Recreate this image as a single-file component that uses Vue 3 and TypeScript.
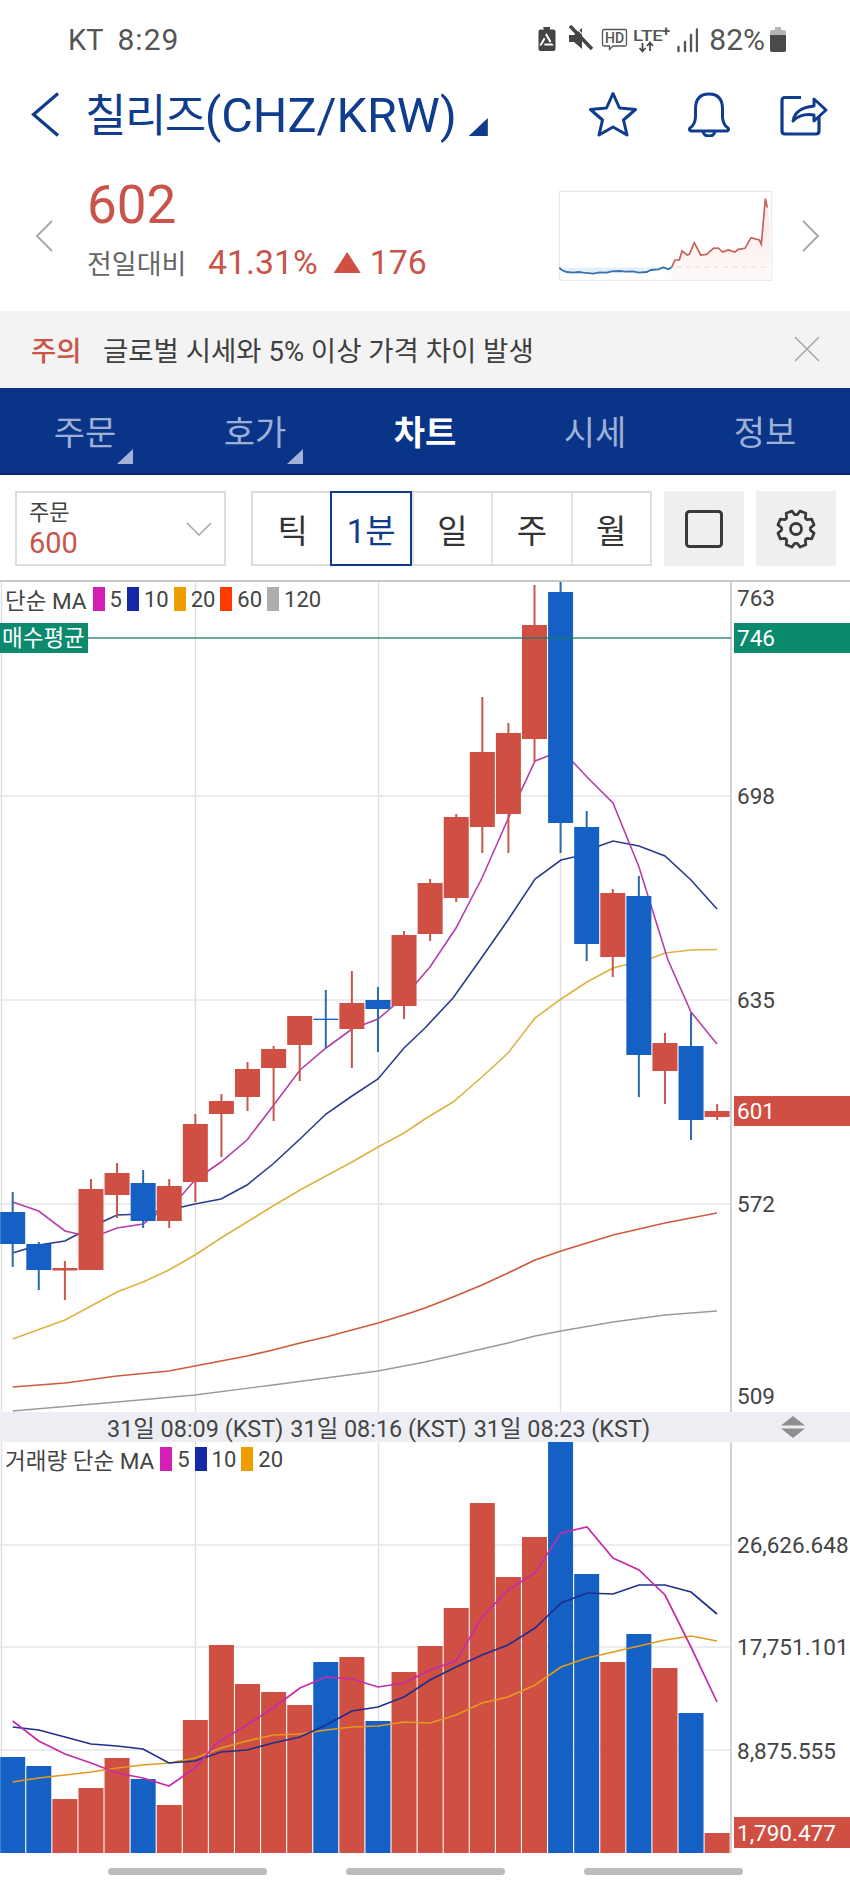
<template>
  <div class="screen">
    <div class="status">
      <span class="status-time">KT<span class="status-clock">8:29</span></span>
      <div class="status-right">
        <svg class="status-icons" width="160" height="36" viewBox="537 19 160 36">
          <path d="M542 25h7v2.500h3.500q2 0 2 2v17.500q0 2 -2 2h-13q-2 0 -2 -2v-17.500q0 -2 2 -2h3.500z" fill="#444" />
          <path d="M545.500 33l5.500 9.500h-11z" fill="none" stroke="#fff" stroke-width="2" stroke-dasharray="8 2.600" />
          <path d="M568 33h5l8 -7v21l-8 -7h-5z" fill="#444" />
          <path d="M569 24l22 23" stroke="#444" stroke-width="3.500" />
          <path d="M569 24l22 23" stroke="#fff" stroke-width="1.200" transform="translate(2.400 -2.200)" />
          <path d="M603 27.500h21q1.500 0 1.500 1.500v13.500q0 1.500 -1.500 1.500h-12l-3.500 3.500v-3.500h-5.500q-1.500 0 -1.500 -1.500v-13.500q0 -1.500 1.500 -1.500z" fill="none" stroke="#555" stroke-width="1.300" />
          <text class="icon-text" x="613.500" y="41" font-size="14" font-weight="500" text-anchor="middle">HD</text>
          <text class="icon-text" x="632" y="39" font-size="15.500" font-weight="500" textLength="30" lengthAdjust="spacingAndGlyphs">LTE</text>
          <text class="icon-text" x="661" y="34" font-size="15" font-weight="700">+</text>
          <path d="M641.500 41v8M638.500 46l3 3.500 3 -3.500M649 49v-8M646 44l3 -3.500 3 3.500" fill="none" stroke="#444" stroke-width="1.700" />
          <path d="M677.500 45v4M684 40v9M690 33v16M696 27.500v21.500" stroke="#555" stroke-width="2.400" stroke-linecap="round" />
        </svg>
        <span class="status-pct">82%</span>
        <svg width="16" height="26" viewBox="0 0 16 26">
          <path d="M5 1h6v3h3q2 0 2 2v4h-16v-4q0 -2 2 -2h3z" fill="#b5b5b5" />
          <path d="M0 9h16v15q0 2 -2 2h-12q-2 0 -2 -2z" fill="#4a4a4a" />
        </svg>
      </div>
    </div>

    <div class="title-row">
      <svg class="back" width="29" height="45" viewBox="0 0 29 45">
        <path d="M27 1.500L2.500 22.500L27 43.500" fill="none" stroke="#0f3c8c" stroke-width="3.200" />
      </svg>
      <h1 class="title"><span class="title-ko">칠리즈</span>(CHZ/KRW)</h1>
      <span class="title-arrow"></span>
      <div class="title-actions">
        <svg width="50" height="46" viewBox="0 0 50 46">
          <path d="M25 2.500L31.500 17L47.500 18.500L35.500 29L39 44L25 36L11 44L14.500 29L2.500 18.500L18.500 17Z" fill="none" stroke="#0f3c8c" stroke-width="3" stroke-linejoin="round" />
        </svg>
        <svg width="46" height="46" viewBox="0 0 46 46">
          <path d="M4 37q5 -3 5.500 -11v-8q0 -15 13.500 -15t13.500 15v8q.5 8 5.500 11q1.500 2 -1 3h-36q-2.500 -1 -1 -3z" fill="none" stroke="#0f3c8c" stroke-width="3" stroke-linejoin="round" />
          <path d="M17 40.500q1 4.500 6 4.500t6 -4.500" fill="none" stroke="#0f3c8c" stroke-width="3" />
        </svg>
        <svg width="48" height="44" viewBox="0 0 48 44">
          <path d="M21 5.500H5q-3 0 -3 3V39q0 3 3 3h31q3 0 3 -3V24" fill="none" stroke="#0f3c8c" stroke-width="3.200" />
          <path d="M13 29q2 -13 21 -15V7l12 11 -12 11v-6q-13 -2 -21 6z" fill="none" stroke="#0f3c8c" stroke-width="3" stroke-linejoin="round" />
        </svg>
      </div>
    </div>

    <div class="price-row">
      <svg class="nav-arrow" width="18" height="32" viewBox="0 0 18 32"><path d="M17 1L2 16L17 31" /></svg>
      <div class="price-main">
        <div class="price">602</div>
        <div class="change">
          <span class="change-label">전일대비</span>
          <span class="change-pct">41.31%</span>
          <span class="change-tri"></span>
          <span class="change-val">176</span>
        </div>
      </div>
      <svg class="spark" width="230" height="100" viewBox="0 0 690 300">
        <defs>
          <linearGradient id="spark-red" x1="0" y1="0" x2="0" y2="1">
            <stop offset="0" stop-color="#f5c9c2" stop-opacity="0.5" />
            <stop offset="1" stop-color="#f5c9c2" stop-opacity="0.08" />
          </linearGradient>
        </defs>
        <rect x="28" y="16" width="637" height="267" fill="#fff" stroke="#e6e6e6" stroke-width="3" />
        <path :d="sparkFill" fill="url(#spark-red)" />
        <path :d="'M28 245 ' + toLine(sparkBlue) + ' L365 244 Z'" fill="#d7e8f7" opacity="0.7" />
        <path d="M380 243H655" stroke="#ecd9d6" stroke-width="3" stroke-dasharray="14 14" />
        <polyline :points="sparkRed" fill="none" stroke="#c5605a" stroke-width="5" />
        <polyline :points="sparkBlue" fill="none" stroke="#3a72ad" stroke-width="5.500" />
      </svg>
      <svg class="nav-arrow" width="18" height="32" viewBox="0 0 18 32"><path d="M1 1L16 16L1 31" /></svg>
    </div>

    <div class="notice">
      <span class="notice-tag">주의</span>
      <span class="notice-text">글로벌 시세와 5% 이상 가격 차이 발생</span>
      <svg class="notice-close" width="26" height="26" viewBox="0 0 26 26">
        <path d="M1 1L25 25M25 1L1 25" stroke="#a8a8a8" stroke-width="1.600" />
      </svg>
    </div>

    <nav class="tabs">
      <div v-for="tab in tabs" :key="tab.label" class="tab" :class="{ active: tab.active }">
        {{ tab.label }}
        <span v-if="tab.more" class="tab-more"></span>
      </div>
    </nav>

    <div class="toolbar">
      <div class="select">
        <div>
          <div class="select-label">주문</div>
          <div class="select-value">600</div>
        </div>
        <svg width="26" height="14" viewBox="0 0 26 14"><path d="M1 1L13 13L25 1" fill="none" stroke="#aaa" stroke-width="1.600" /></svg>
      </div>
      <div class="segments">
        <div v-for="seg in segments" :key="seg" class="segment" :class="{ active: seg === '1분' }">{{ seg }}</div>
      </div>
      <div class="tool-btn">
        <svg width="38" height="38" viewBox="0 0 38 38"><rect x="1.500" y="1.500" width="35" height="35" rx="3" fill="none" stroke="#3a3a3a" stroke-width="3" /></svg>
      </div>
      <div class="tool-btn">
        <svg width="40" height="40" viewBox="0 0 40 40">
          <path :d="gear" fill="none" stroke="#3a3a3a" stroke-width="2.800" stroke-linejoin="round" />
          <circle cx="20" cy="20" r="5.500" fill="none" stroke="#3a3a3a" stroke-width="2.800" />
        </svg>
      </div>
    </div>

    <section class="pane price-pane">
      <div class="legend">
        <span class="legend-name">단순 MA</span>
        <template v-for="item in priceLegend" :key="item.label">
          <i class="swatch" :style="{ background: item.color }"></i>
          <span class="legend-num">{{ item.label }}</span>
        </template>
      </div>
      <svg class="chart" width="850" height="830" viewBox="0 582 850 830">
        <path d="M1.500 582V1412M195.500 582V1412M378.500 582V1412M560.500 582V1412" stroke="#dedede" stroke-width="1.300" />
        <path d="M0 796H731M0 1000H731M0 1204H731" stroke="#e6e6e6" stroke-width="1.500" />
        <path d="M731 582V1412" stroke="#d2d2d2" stroke-width="2" />
        <polyline v-for="line in priceLines" :key="line.color" :points="line.points" fill="none" :stroke="line.color" :stroke-width="line.width" />
        <g v-for="c in candleBars" :key="c.x">
          <rect :x="c.x - 1" :y="c.high" width="2" :height="c.low - c.high" :fill="c.wick" />
          <rect :x="c.x - 12.500" :y="c.top" width="25" :height="c.bottom - c.top" :fill="c.fill" />
        </g>
        <path d="M0 638H731" stroke="#1b7d68" stroke-width="1.600" opacity="0.85" />
        <rect x="0" y="623" width="88" height="30" fill="#0b8a6d" />
        <text class="label-white" x="2" y="646" font-size="20.500">매수평균</text>
        <rect x="734" y="623" width="116" height="30" fill="#0b8a6d" />
        <text class="label-white" x="737" y="638" dy="0.36em">746</text>
        <rect x="734" y="1096" width="116" height="30" fill="#cf4f43" />
        <text class="label-white" x="737" y="1111" dy="0.36em">601</text>
        <text v-for="t in priceAxis" :key="t.label" class="axis" x="737" :y="t.y" dy="0.36em">{{ t.label }}</text>
      </svg>
    </section>

    <div class="time-bar">
      <span v-for="t in times" :key="t">{{ t }}</span>
      <svg class="splitter" width="24" height="22" viewBox="0 0 24 22">
        <path d="M12 0L24 9.500H0Z" fill="#8e8e8e" />
        <path d="M0 12.500H24L12 22Z" fill="#8e8e8e" />
      </svg>
    </div>

    <section class="pane volume-pane">
      <div class="legend">
        <span class="legend-name">거래량 단순 MA</span>
        <template v-for="item in volumeLegend" :key="item.label">
          <i class="swatch" :style="{ background: item.color }"></i>
          <span class="legend-num">{{ item.label }}</span>
        </template>
      </div>
      <svg class="chart" width="850" height="411" viewBox="0 1442 850 411">
        <path d="M1.500 1442V1853M195.500 1442V1853M378.500 1442V1853M560.500 1442V1853" stroke="#dedede" stroke-width="1.300" />
        <path d="M0 1545H731M0 1647H731M0 1750H731" stroke="#e6e6e6" stroke-width="1.500" />
        <path d="M731 1442V1853" stroke="#d2d2d2" stroke-width="2" />
        <rect v-for="b in volumeBars" :key="b.x" :x="b.x - 12.500" :y="b.top" width="25" :height="1853 - b.top" :fill="b.fill" />
        <polyline v-for="line in volumeLines" :key="line.color" :points="line.points" fill="none" :stroke="line.color" stroke-width="1.700" />
        <rect x="734" y="1817" width="116" height="31" fill="#cf4f43" />
        <text class="label-white" x="737" y="1832.500" dy="0.36em">1,790.477</text>
        <text v-for="t in volumeAxis" :key="t.label" class="axis" x="737" :y="t.y" dy="0.36em">{{ t.label }}</text>
      </svg>
    </section>

    <div class="scrollers">
      <span class="pill"></span>
      <span class="pill"></span>
      <span class="pill"></span>
    </div>
  </div>
</template>

<script setup lang="ts">
type Pt = [number, number];

const RED = "#cf4f43";
const BLUE = "#1460c4";
const colX = (i: number) => 12.7 + 26.09 * i;
const toLine = (pts: string) => pts.split(" ").map((p) => "L" + p.replace(",", " ")).join(" ");
const join = (pts: Pt[]) => pts.map((p) => p.join(",")).join(" ");

const tabs = [
  { label: "주문", more: true },
  { label: "호가", more: true },
  { label: "차트", active: true },
  { label: "시세" },
  { label: "정보" },
];
const segments = ["틱", "1분", "일", "주", "월"];
const times = ["31일 08:09 (KST)", "31일 08:16 (KST)", "31일 08:23 (KST)"];

const ma = { m5: "#d51fb4", m10: "#1329a8", m20: "#ee9c00", m60: "#ff3b00", m120: "#adadad" };
const priceLegend = [
  { label: "5", color: ma.m5 },
  { label: "10", color: ma.m10 },
  { label: "20", color: ma.m20 },
  { label: "60", color: ma.m60 },
  { label: "120", color: ma.m120 },
];
const volumeLegend = priceLegend.slice(0, 3);

const priceAxis = [
  { label: "763", y: 598 },
  { label: "698", y: 796 },
  { label: "635", y: 1000 },
  { label: "572", y: 1204 },
  { label: "509", y: 1396 },
];
const volumeAxis = [
  { label: "26,626.648", y: 1545 },
  { label: "17,751.101", y: 1647 },
  { label: "8,875.555", y: 1751 },
];

// high, body top, body bottom, low, falling
const candles: [number, number, number, number, boolean][] = [
  [1192, 1212, 1244, 1267, true],
  [1242, 1244, 1270, 1290, true],
  [1261, 1268, 1270.5, 1300, false],
  [1179, 1189, 1270, 1270, false],
  [1163, 1173, 1195, 1218, false],
  [1170, 1183, 1221, 1228, true],
  [1179, 1186, 1221, 1228, false],
  [1114, 1124, 1182, 1202, false],
  [1094, 1101, 1114, 1157, false],
  [1062, 1069, 1097, 1111, false],
  [1046, 1049, 1068, 1121, false],
  [1016, 1016, 1045, 1081, false],
  [990, 1018.7, 1020, 1048, true],
  [971, 1003, 1029, 1068, false],
  [987, 1000, 1009, 1052, true],
  [931, 935, 1006, 1019, false],
  [879, 883, 934, 941, false],
  [814, 817, 898, 902, false],
  [697, 752, 827, 853, false],
  [723, 733, 814, 853, false],
  [585, 625, 739, 762, false],
  [582, 592, 823, 853, true],
  [811, 827, 944, 961, true],
  [889, 893, 957, 977, false],
  [876, 896, 1055, 1097, true],
  [1033, 1043, 1071, 1104, false],
  [1013, 1046, 1120, 1140, true],
  [1104, 1111, 1117, 1120, false],
];
const candleBars = candles.map((c, i) => ({
  x: colX(i),
  high: c[0],
  top: c[1],
  bottom: c[2],
  low: c[3],
  fill: c[4] ? BLUE : RED,
  wick: c[4] ? "#2a6aad" : "#c9564c",
}));

const priceLines = [
  {
    color: "#9a9a9a",
    width: 1.3,
    points: join([[12.7, 1411], [117, 1402], [195, 1395], [273, 1385], [378, 1371], [425, 1362], [508, 1343], [535, 1336], [561, 1331], [613, 1322], [665, 1315], [717, 1311]]),
  },
  {
    color: "#cf5a3c",
    width: 1.7,
    points: join([[12.7, 1387], [65, 1383], [117, 1376], [169, 1371], [195, 1366], [221, 1361], [247, 1356], [273, 1350], [300, 1343], [326, 1337], [378, 1323], [404, 1315], [425, 1308], [453, 1297], [482, 1285], [508, 1273], [535, 1260], [561, 1251], [587, 1243], [613, 1235], [639, 1229], [665, 1223], [691, 1218], [717, 1213]]),
  },
  {
    color: "#dfb244",
    width: 1.6,
    points: join([[12.7, 1339], [65, 1320], [117, 1292], [143, 1282], [169, 1270], [195, 1255], [221, 1238], [247, 1222], [273, 1206], [300, 1190], [326, 1176], [352, 1162], [378, 1147], [404, 1133], [425, 1119], [453, 1102], [482, 1077], [508, 1053], [535, 1018], [561, 999], [587, 982], [613, 968], [625, 965], [652, 958], [665, 953], [691, 950], [717, 949.5]]),
  },
  {
    color: "#2a3c8c",
    width: 1.6,
    points: join([[12.7, 1253], [38.7, 1245], [65, 1241], [78, 1234], [104, 1221], [117, 1215], [143, 1214], [182, 1207], [195, 1204], [221, 1199], [247, 1185], [273, 1164], [300, 1139], [326, 1114], [352, 1096], [378, 1079], [404, 1048], [425, 1028], [453, 998], [480, 960], [508, 920], [535, 879], [561, 860], [574, 857], [599, 846], [613, 841], [639, 846], [665, 856], [691, 880], [717, 909]]),
  },
  {
    color: "#b53fa8",
    width: 1.6,
    points: join([[12.7, 1202], [38.7, 1211], [65, 1231], [78, 1234], [104, 1233], [117, 1228], [143, 1224], [182, 1195], [195, 1180], [208, 1171], [221, 1162], [247, 1140], [273, 1106], [300, 1070], [326, 1048], [352, 1029], [378, 1019], [404, 997], [430, 967], [456, 928], [482, 878], [508, 819], [535, 761], [548, 756], [561, 752], [573, 762], [587, 777], [613, 803], [639, 867], [668, 960], [691, 1012], [717, 1044]]),
  },
];

const volumeTops = [1757, 1766, 1799, 1788, 1758, 1779, 1805, 1720, 1645, 1684, 1692, 1705, 1662, 1657, 1721, 1672, 1646, 1608, 1503, 1577, 1537, 1442, 1574, 1662, 1634, 1668, 1713, 1833];
const volumeBlue = new Set([0, 1, 5, 12, 14, 21, 22, 24, 26]);
const volumeBars = volumeTops.map((top, i) => ({ x: colX(i), top, fill: volumeBlue.has(i) ? BLUE : RED }));

const volumeLines = [
  {
    color: "#e39a1e",
    points: join([[12.7, 1782], [38.7, 1778], [65, 1775], [91, 1772], [117, 1768], [143, 1765], [169, 1763], [195, 1758], [221, 1748], [247, 1741], [273, 1735], [300, 1734], [326, 1730], [352, 1727], [378, 1726], [404, 1722], [430, 1723], [456, 1715], [482, 1703], [508, 1697], [535, 1685], [561, 1667], [587, 1658], [613, 1652], [639, 1646], [665, 1640], [691, 1636], [717, 1641]]),
  },
  {
    color: "#1f2f8c",
    points: join([[12.7, 1727], [38.7, 1730], [65, 1737], [91, 1744], [117, 1746], [143, 1749], [169, 1763], [195, 1761], [221, 1752], [247, 1750], [273, 1743], [300, 1737], [326, 1725], [352, 1711], [378, 1707], [404, 1697], [430, 1680], [456, 1667], [482, 1655], [508, 1645], [535, 1628], [561, 1603], [587, 1593], [613, 1594], [639, 1585], [665, 1585], [691, 1592], [717, 1614]]),
  },
  {
    color: "#c52ca8",
    points: join([[12.7, 1721], [38.7, 1741], [65, 1754], [91, 1763], [117, 1773], [143, 1778], [169, 1786], [195, 1768], [217, 1743], [247, 1725], [273, 1708], [300, 1688], [326, 1677], [352, 1679], [378, 1687], [404, 1683], [430, 1670], [456, 1661], [482, 1617], [508, 1590], [535, 1573], [561, 1533], [587, 1527], [613, 1558], [639, 1570], [665, 1595], [691, 1647], [717, 1702]]),
  },
];

const sparkBlue = "28,245 35,252 50,258 70,260 85,258 100,260 130,263 150,259 170,260 185,256 210,255 225,257 250,256 265,260 290,258 303,252 325,250 340,244 355,250 365,244";
const sparkRed = "365,244 375,222 388,222 396,195 412,207 418,205 433,170 452,207 470,205 490,187 505,186 518,198 535,192 555,198 565,190 585,187 603,155 628,162 634,175 646,38 652,65";
const sparkFill = "M365 244 " + toLine(sparkRed) + " L660 120 L660 282 L365 282 Z";

// gear outline with 8 teeth
const gearPath = () => {
  const pts: string[] = [];
  const n = 8;
  const step = (Math.PI * 2) / n;
  for (let i = 0; i < n; i++) {
    const a = i * step + step / 2;
    const seq: [number, number][] = [
      [14.5, -0.5],
      [18.5, -0.27],
      [18.5, 0.27],
      [14.5, 0.5],
    ];
    for (const [r, off] of seq) {
      const t = a + off * step * 0.78;
      pts.push((20 + r * Math.cos(t)).toFixed(2) + " " + (20 + r * Math.sin(t)).toFixed(2));
    }
  }
  return "M" + pts.join("L") + "Z";
};
const gear = gearPath();
</script>

<style>
html,
body {
  margin: 0;
  background: #fff;
}
</style>

<style scoped>
.screen {
  width: 850px;
  height: 1889px;
  overflow: hidden;
  background: #fff;
  font-family: Roboto, "Noto Sans CJK KR", sans-serif;
  color: #333;
}

.status {
  height: 78px;
  display: flex;
  align-items: center;
  justify-content: space-between;
  padding: 0 64px 0 68px;
}

.status-time {
  font-size: 29px;
  color: #555;
  white-space: pre;
}

.status-clock {
  font-size: 30px;
  letter-spacing: 1px;
  margin-left: 14px;
}

.status-right {
  display: flex;
  align-items: center;
}

.status-pct {
  font-size: 30px;
  color: #555;
  margin: 0 5px 0 11px;
}

.icon-text {
  fill: #555;
  font-family: Roboto, sans-serif;
}

.title-row {
  height: 72px;
  display: flex;
  align-items: center;
  padding-left: 31px;
}

.title {
  margin: 4px 0 0 25px;
  font-size: 48.500px;
  font-weight: 400;
  color: #0f3c8c;
  line-height: 60px;
  white-space: nowrap;
}

.title-ko {
  font-size: 45px;
  letter-spacing: -1.500px;
}

.title-arrow {
  width: 19px;
  height: 18px;
  margin: 26px 0 0 12px;
  background: #0f3c8c;
  clip-path: polygon(100% 0, 100% 100%, 0 100%);
}

.title-actions {
  margin-left: auto;
  margin-right: 22px;
  display: flex;
  align-items: center;
  gap: 48px;
}

.price-row {
  height: 161px;
  display: flex;
  align-items: center;
  padding-left: 35px;
}

.nav-arrow {
  margin-top: 10px;
  flex: none;
}

.nav-arrow path {
  fill: none;
  stroke: #aaa;
  stroke-width: 2;
}

.price-main {
  width: 498px;
  margin-left: 34px;
  margin-bottom: 5px;
}

.price {
  font-size: 53px;
  line-height: 58px;
  color: #c9544a;
}

.change {
  margin-top: 11px;
  display: flex;
  align-items: center;
  height: 36px;
}

.change-label {
  width: 121px;
  font-size: 27px;
  color: #666;
  white-space: nowrap;
}

.change-pct,
.change-val {
  font-size: 33.800px;
  color: #c9544a;
}

.change-tri {
  width: 27px;
  height: 21px;
  margin: 0 9px 0 16px;
  background: #cf4f43;
  clip-path: polygon(50% 0, 100% 100%, 0 100%);
}

.spark {
  flex: none;
  margin: 10px 22px 0 -35px;
}

.notice {
  height: 77px;
  display: flex;
  align-items: center;
  background: #f3f3f3;
  padding: 0 30px 2px 31px;
  box-sizing: border-box;
  font-size: 27.500px;
}

.notice-tag {
  color: #c9544a;
  font-weight: 500;
  width: 72px;
}

.notice-text {
  color: #3f3f3f;
}

.notice-close {
  margin-left: auto;
}

.tabs {
  height: 87px;
  display: grid;
  grid-template-columns: repeat(5, 170px);
  background: #0a3488;
  border-bottom: 2px solid #072a70;
  box-sizing: border-box;
}

.tab {
  position: relative;
  display: flex;
  align-items: center;
  justify-content: center;
  font-size: 34px;
  color: #9eb0d6;
  padding-bottom: 1px;
}

.tab.active {
  color: #fff;
  font-weight: 700;
}

.tab-more {
  position: absolute;
  left: 117px;
  top: 61px;
  width: 16px;
  height: 15px;
  background: #a3b3d7;
  clip-path: polygon(100% 0, 100% 100%, 0 100%);
}

.toolbar {
  height: 105px;
  box-sizing: border-box;
  padding: 16px 0 0 15px;
  display: flex;
  align-items: flex-start;
}

.select {
  width: 211px;
  height: 75px;
  box-sizing: border-box;
  border: 2px solid #dcdcdc;
  display: flex;
  align-items: center;
  justify-content: space-between;
  padding: 0 12px 0 12px;
}

.select-label {
  font-size: 22px;
  line-height: 29px;
  color: #444;
}

.select-value {
  font-size: 29px;
  line-height: 32px;
  color: #c9544a;
}

.segments {
  margin-left: 25px;
  width: 401px;
  height: 75px;
  box-sizing: border-box;
  border: 2px solid #dcdcdc;
  display: grid;
  grid-template-columns: repeat(5, 1fr);
}

.segment {
  position: relative;
  display: flex;
  align-items: center;
  justify-content: center;
  font-size: 33px;
  color: #333;
  border-left: 2px solid #e4e4e4;
}

.segment:first-child {
  border-left: 0;
}

.segment.active {
  color: #0f3c8c;
  margin: -2px 0 -2px -2px;
  border: 2.500px solid #0f3c8c;
  z-index: 1;
}

.tool-btn {
  width: 80px;
  height: 75px;
  margin-left: 12px;
  background: #efefef;
  display: flex;
  align-items: center;
  justify-content: center;
}

.pane {
  position: relative;
}

.price-pane {
  border-top: 2px solid #c8c8c8;
  height: 830px;
}

.volume-pane {
  height: 411px;
}

.chart {
  display: block;
}

.legend {
  position: absolute;
  z-index: 1;
  left: 5px;
  top: 5px;
  height: 24px;
  display: flex;
  align-items: center;
  font-size: 22.500px;
  color: #444;
  white-space: nowrap;
}

.legend-name {
  margin-right: 6px;
}

.legend-num {
  font-size: 22px;
  margin: 0 5px 0 5px;
}

.swatch {
  width: 12px;
  height: 24px;
}

.axis {
  font-family: Roboto, sans-serif;
  font-size: 22.500px;
  fill: #444;
}

.label-white {
  font-family: Roboto, "Noto Sans CJK KR", sans-serif;
  font-size: 22.500px;
  fill: #fff;
}

.time-bar {
  height: 30px;
  background: #eceef3;
  display: flex;
  align-items: center;
  padding-left: 107px;
  gap: 7px;
  font-size: 23.400px;
  color: #444;
  white-space: nowrap;
}

.splitter {
  margin-left: 124px;
  flex: none;
}

.scrollers {
  display: flex;
  padding: 15px 0 0 108px;
  gap: 79px;
}

.pill {
  width: 159px;
  height: 7px;
  border-radius: 4px;
  background: #bcbcbc;
}
</style>
